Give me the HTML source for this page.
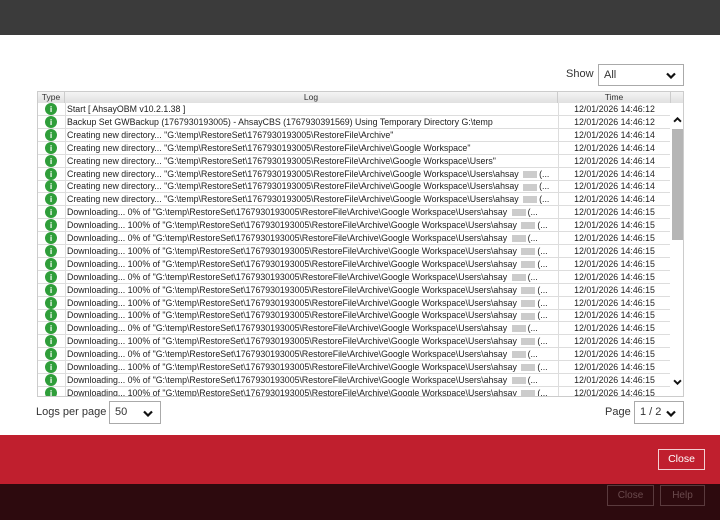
<!DOCTYPE html>
<html><head><meta charset="utf-8"><style>
*{margin:0;padding:0;box-sizing:border-box}
body{width:720px;height:520px;position:relative;overflow:hidden;background:#fff;font-family:"Liberation Sans",sans-serif;color:#222}
.top{position:absolute;left:0;top:0;width:720px;height:35px;background:#3b3b3b}
.red{position:absolute;left:0;top:435px;width:720px;height:49px;background:#c01f2e}
.dark{position:absolute;left:0;top:484px;width:720px;height:36px;background:#2d0a0e}
.lbl{position:absolute;font-size:11px;color:#333}
.sel{position:absolute;border:1px solid #aaa;background:#fff;font-size:11px;padding:0 5px;color:#333}
.sel svg{position:absolute;right:7px;top:50%;margin-top:-3px}
.tbl{position:absolute;left:37px;top:91px;width:647px;height:306px;border:1px solid #ccc;overflow:hidden}
.hd{position:absolute;top:0;height:11px;background:linear-gradient(#f4f4f4,#e0e0e0);font-size:8.5px;text-align:center;line-height:11px;border-right:1px solid #ccc;color:#333}
.row{position:absolute;left:0;width:632px;height:13px;border-bottom:1px solid #ddd;font-size:8.8px;line-height:12px;white-space:nowrap}
.row .ic{position:absolute;left:7px;top:0;width:12px;height:12px;border-radius:50%;background:#2f9e3a;color:#fff;font-size:8.5px;font-weight:bold;text-align:center;line-height:12px}
.row .lg{position:absolute;left:27px;width:493px;overflow:hidden;border-left:1px solid #ddd;padding-left:1px}
.row .tm{position:absolute;left:520px;width:112px;text-align:center;border-left:1px solid #ddd}
.bl{display:inline-block;width:14px;height:7px;background:#ccc;vertical-align:middle;margin:0 2px}
.sb{position:absolute;left:633px;top:12px;width:13px;height:294px;background:#fff}
.th{position:absolute;left:1px;top:25px;width:12px;height:111px;background:#b5b5b5}
.btn{position:absolute;border:1px solid;font-size:10px;text-align:center}
</style></head><body>
<div class="top"></div>
<div class="lbl" style="left:566px;top:68px">Show</div>
<div class="sel" style="left:598px;top:64px;width:86px;height:22px;line-height:20px">All<svg width="10" height="7" viewBox="0 0 10 7"><path d="M1 1.5L5 5.5L9 1.5" fill="none" stroke="#111" stroke-width="2.2"/></svg></div>
<div class="tbl">
<div class="hd" style="left:0;width:27px">Type</div>
<div class="hd" style="left:27px;width:493px">Log</div>
<div class="hd" style="left:520px;width:113px">Time</div>
<div class="hd" style="left:633px;width:14px;border:0"></div>
<div id="rows"></div>
<div class="sb"><svg style="position:absolute;left:2px;top:13px" width="9" height="6" viewBox="0 0 10 7"><path d="M1 5.5L5 1.5L9 5.5" fill="none" stroke="#111" stroke-width="2.2"/></svg><div class="th"></div><svg style="position:absolute;left:2px;top:275px" width="9" height="6" viewBox="0 0 10 7"><path d="M1 1.5L5 5.5L9 1.5" fill="none" stroke="#111" stroke-width="2.2"/></svg></div>
</div>
<div class="lbl" style="left:36px;top:406px">Logs per page</div>
<div class="sel" style="left:109px;top:401px;width:52px;height:23px;line-height:21px">50<svg width="10" height="7" viewBox="0 0 10 7"><path d="M1 1.5L5 5.5L9 1.5" fill="none" stroke="#111" stroke-width="2.2"/></svg></div>
<div class="lbl" style="left:605px;top:406px">Page</div>
<div class="sel" style="left:634px;top:401px;width:50px;height:23px;line-height:21px">1 / 2<svg width="10" height="7" viewBox="0 0 10 7"><path d="M1 1.5L5 5.5L9 1.5" fill="none" stroke="#111" stroke-width="2.2"/></svg></div>
<div class="red"></div>
<div class="btn" style="left:658px;top:449px;width:47px;height:21px;border-color:#f2d0d3;color:#fff;line-height:19px;font-size:10.5px">Close</div>
<div class="dark"></div>
<div class="btn" style="left:607px;top:485px;width:47px;height:21px;border-color:#5a3a3d;color:#6a4a4d;line-height:19px">Close</div>
<div class="btn" style="left:660px;top:485px;width:45px;height:21px;border-color:#5a3a3d;color:#6a4a4d;line-height:19px">Help</div>
<script>
var P='"G:\\temp\\RestoreSet\\1767930193005\\RestoreFile\\Archive';
var U=P+'\\Google Workspace\\Users\\ahsay <span class="bl"></span>(...';
var L=[['Start [ AhsayOBM v10.2.1.38 ]','12'],
['Backup Set GWBackup (1767930193005) - AhsayCBS (1767930391569) Using Temporary Directory G:\\temp','12'],
['Creating new directory... '+P+'"','14'],
['Creating new directory... '+P+'\\Google Workspace"','14'],
['Creating new directory... '+P+'\\Google Workspace\\Users"','14'],
['Creating new directory... '+U,'14'],['Creating new directory... '+U,'14'],['Creating new directory... '+U,'14']];
var d=[0,100,0,100,100,0,100,100,100,0,100,0,100,0,100];
d.forEach(function(p){L.push(['Downloading... '+p+'% of '+U,'15'])});
var h='';
L.forEach(function(r,i){var t=11+i*12.9;
h+='<div class="row" style="top:'+t+'px"><div class="ic">i</div><div class="lg">'+r[0]+'</div><div class="tm">12/01/2026 14:46:'+r[1]+'</div></div>';});
document.getElementById('rows').innerHTML=h;
</script>
</body></html>
